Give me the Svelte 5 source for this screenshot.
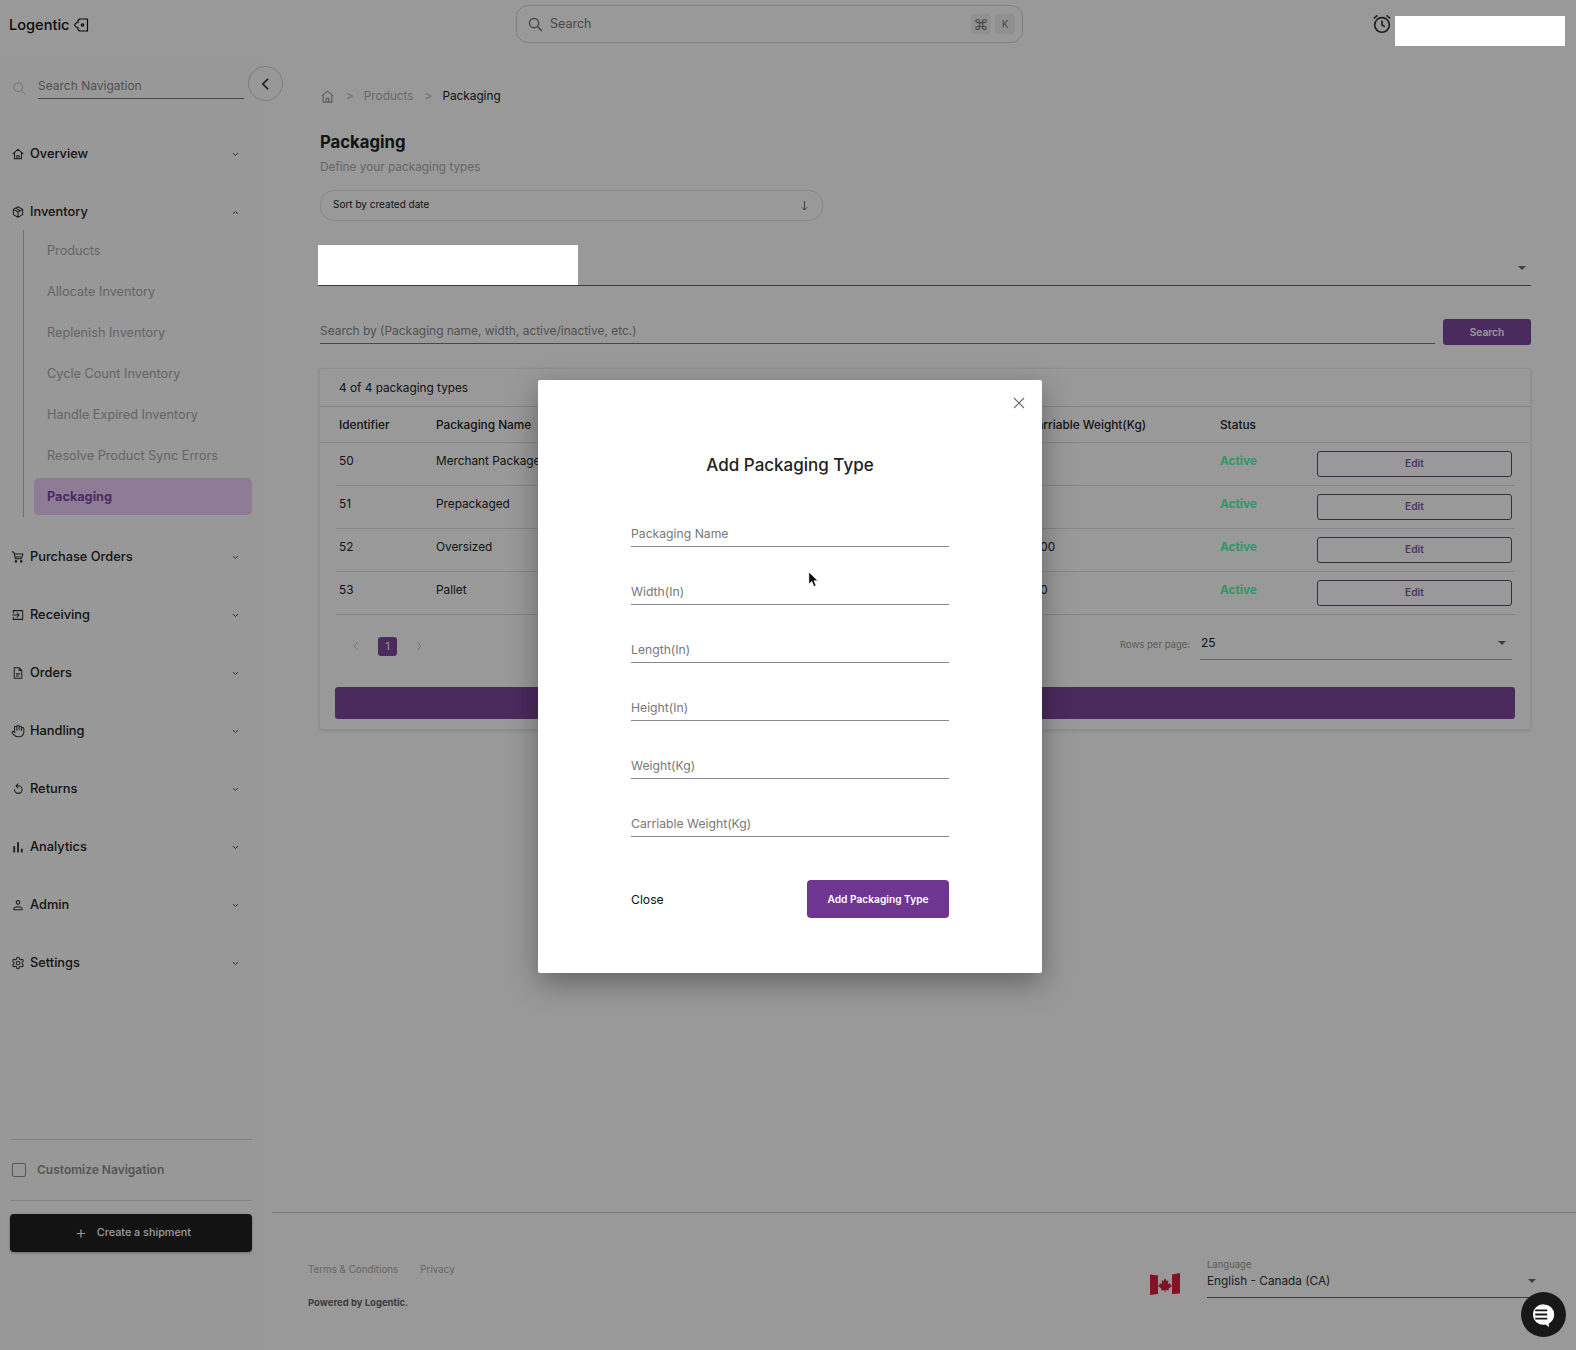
<script>
  const icons = {
    home: '<path d="M3.5 11.5 12 4l8.5 7.5M6 9.500V20h12V9.500M10 20v-5h4v5"/>',
    box: '<path d="M12 3l8 4.500v9L12 21l-8-4.500v-9zM4 7.500l8 4.500 8-4.500M12 12v9M8 5.300l8 4.500"/>',
    cart: '<path d="M2 3l3 1 2.500 11H19M6 7h14.500l-1.500 5H7.300"/><circle cx="8.500" cy="19.500" r="1.300"/><circle cx="17.500" cy="19.500" r="1.300"/>',
    receiving: '<path d="M4 8V4.500h16v15H4V16M3 12h11M10.500 8.500 14 12l-3.500 3.500"/>',
    orders: '<path d="M5.500 3H14l4.500 4.500V21h-13zM14 3v4.500h4.500M9 13.500h6M9 17h4"/>',
    hand: '<path d="M18 11V6a2 2 0 0 0-4 0M14 10V4a2 2 0 0 0-4 0v2M10 10.500V6a2 2 0 0 0-4 0v8M18 8a2 2 0 1 1 4 0v6a8 8 0 0 1-8 8h-2c-2.800 0-4.500-.860-5.990-2.340l-3.600-3.600a2 2 0 0 1 2.830-2.820L7 15"/>',
    returns: '<path d="M6 13a6.500 6.500 0 1 0 6.500-6.500H9M12 3 8.500 6.500 12 10"/>',
    admin: '<circle cx="12" cy="7.500" r="3"/><path d="M5 20v-1.500c0-2.500 4-3.500 7-3.500s7 1 7 3.500V20z"/>',
    settings: '<path d="M12.220 2h-.440a2 2 0 0 0-2 2v.180a2 2 0 0 1-1 1.730l-.430.250a2 2 0 0 1-2 0l-.150-.080a2 2 0 0 0-2.730.730l-.220.380a2 2 0 0 0 .730 2.730l.150.100a2 2 0 0 1 1 1.720v.510a2 2 0 0 1-1 1.740l-.150.090a2 2 0 0 0-.730 2.730l.220.380a2 2 0 0 0 2.730.730l.150-.080a2 2 0 0 1 2 0l.430.250a2 2 0 0 1 1 1.730V20a2 2 0 0 0 2 2h.440a2 2 0 0 0 2-2v-.180a2 2 0 0 1 1-1.730l.430-.250a2 2 0 0 1 2 0l.150.080a2 2 0 0 0 2.730-.730l.220-.390a2 2 0 0 0-.730-2.730l-.150-.080a2 2 0 0 1-1-1.740v-.500a2 2 0 0 1 1-1.740l.150-.090a2 2 0 0 0 .730-2.730l-.220-.380a2 2 0 0 0-2.730-.730l-.150.080a2 2 0 0 1-2 0l-.430-.250a2 2 0 0 1-1-1.730V4a2 2 0 0 0-2-2z"/><circle cx="12" cy="12" r="3"/>',
    analytics: '<path d="M5.500 12v8M12 5v15M18.500 16v4" stroke-width="3.200"/>'
  };

  const subItems = ['Products', 'Allocate Inventory', 'Replenish Inventory', 'Cycle Count Inventory', 'Handle Expired Inventory', 'Resolve Product Sync Errors', 'Packaging'];
  const lowerNav = [
    ['Purchase Orders', 'cart'], ['Receiving', 'receiving'], ['Orders', 'orders'], ['Handling', 'hand'],
    ['Returns', 'returns'], ['Analytics', 'analytics'], ['Admin', 'admin'], ['Settings', 'settings']
  ];
  const rows = [
    { id: 50, name: 'Merchant Packaged', weight: '5' },
    { id: 51, name: 'Prepackaged', weight: '8' },
    { id: 52, name: 'Oversized', weight: '1000' },
    { id: 53, name: 'Pallet', weight: '100' }
  ];
  const fields = ['Packaging Name', 'Width(In)', 'Length(In)', 'Height(In)', 'Weight(Kg)', 'Carriable Weight(Kg)'];
</script>

{#snippet icon(name)}
  <svg class="nav-icon" viewBox="0 0 24 24" fill="none" stroke="currentColor" stroke-width="1.800" stroke-linejoin="round" stroke-linecap="round">{@html icons[name]}</svg>
{/snippet}

{#snippet chevron(up)}
  <svg class="chev" viewBox="0 0 10 6" fill="none" stroke="currentColor" stroke-width="1.400">
    <path d={up ? 'M1.500 5 5 1.500 8.500 5' : 'M1.500 1 5 4.500 8.500 1'} />
  </svg>
{/snippet}

<div class="shell">
  <header class="topbar">
    <div class="logo">
      Logentic
      <svg viewBox="0 0 16 16" fill="none" stroke="currentColor" stroke-width="1.200" stroke-linejoin="round">
        <path d="M6.500 2h8v12h-8L5 12.500v-2L3 10 1.500 8 3 6l2-.5v-2z" />
        <circle cx="9.500" cy="8" r="1.200" />
      </svg>
    </div>
    <div class="global-search">
      <svg viewBox="0 0 24 24" fill="none" stroke="currentColor" stroke-width="2"><circle cx="10" cy="10" r="6.500" /><path d="m15 15 6 6" /></svg>
      <span class="gs-text">Search</span>
      <span class="kbd cmd">⌘</span>
      <span class="kbd">K</span>
    </div>
    <div class="top-right">
      <svg class="alarm" viewBox="0 0 24 24" fill="none" stroke="currentColor" stroke-width="1.800">
        <circle cx="12" cy="13" r="8" /><path d="M12 8.500V13l3 2M3 6l4-3.500M21 6l-4-3.500" />
      </svg>
      <div class="redact user-box"></div>
    </div>
  </header>

  <div class="body">
    <aside class="sidebar">
      <div class="nav-search">
        <svg viewBox="0 0 24 24" fill="none" stroke="currentColor" stroke-width="1.600"><circle cx="10" cy="10" r="7" /><path d="m15.500 15.500 6 6" /></svg>
        <span class="nav-search-input">Search Navigation</span>
        <button class="collapse" aria-label="Collapse">
          <svg viewBox="0 0 12 16" fill="none" stroke="currentColor" stroke-width="2"><path d="M9 2 3 8l6 6" /></svg>
        </button>
      </div>

      <nav>
        <div class="nav-head">{@render icon('home')}<span>Overview</span>{@render chevron(false)}</div>
        <div class="nav-head">{@render icon('box')}<span>Inventory</span>{@render chevron(true)}</div>
        <ul class="sub">
          {#each subItems as item}
            <li class:active={item === 'Packaging'}>{item}</li>
          {/each}
        </ul>
        {#each lowerNav as [label, name]}
          <div class="nav-head">{@render icon(name)}<span>{label}</span>{@render chevron(false)}</div>
        {/each}
      </nav>

      <div class="side-bottom">
        <div class="customize"><span class="check"></span>Customize Navigation</div>
        <button class="create"><span class="plus">+</span>Create a shipment</button>
      </div>
    </aside>

    <div class="content">
      <main>
        <div class="crumbs">
          <svg viewBox="0 0 24 24" fill="none" stroke="currentColor" stroke-width="1.800"><path d="M3 11 12 3.500 21 11M5 9.500V21h14V9.500M10 21v-6h4v6" /></svg>
          <span class="sep">&gt;</span>
          <span>Products</span>
          <span class="sep">&gt;</span>
          <span class="current">Packaging</span>
        </div>

        <h1>Packaging</h1>
        <p class="subtitle">Define your packaging types</p>

        <div class="sort">
          <span>Sort by created date</span>
          <svg viewBox="0 0 12 16" fill="none" stroke="currentColor" stroke-width="1.200"><path d="M6 2v12M2.500 10.500 6 14l3.500-3.500" /></svg>
        </div>

        <div class="tab-select">
          <div class="redact tab-box"></div>
          <span class="caret"></span>
        </div>

        <div class="search-row">
          <div class="search-input">Search by (Packaging name, width, active/inactive, etc.)</div>
          <button class="search-btn">Search</button>
        </div>

        <section class="card">
          <div class="card-title">4 of 4 packaging types</div>
          <div class="grid head">
            <span>Identifier</span>
            <span>Packaging Name</span>
            <span class="carriable">Carriable Weight(Kg)</span>
            <span>Status</span>
            <span></span>
          </div>
          {#each rows as row}
            <div class="grid row">
              <span>{row.id}</span>
              <span>{row.name}</span>
              <span class="carriable">{row.weight}</span>
              <span class="status">Active</span>
              <button class="edit">Edit</button>
            </div>
          {/each}
          <div class="pager">
            <svg class="page-arrow" viewBox="0 0 8 12" fill="none" stroke="currentColor" stroke-width="1.200"><path d="M6 1 1.500 6 6 11" /></svg>
            <span class="page-num">1</span>
            <svg class="page-arrow" viewBox="0 0 8 12" fill="none" stroke="currentColor" stroke-width="1.200"><path d="M2 1l4.500 5L2 11" /></svg>
            <span class="rows-label">Rows per page:</span>
            <div class="rows-select">25<span class="caret"></span></div>
          </div>
          <div class="wide-bar"></div>
        </section>
      </main>

      <footer>
        <div class="foot-left">
          <div class="foot-links"><span>Terms &amp; Conditions</span><span>Privacy</span></div>
          <div class="powered">Powered by Logentic.</div>
        </div>
        <div class="lang">
          <svg class="flag" viewBox="0 0 30 22">
            <path d="M0 1.500 8 2.500V21L0 22z" fill="#d8203f" />
            <path d="M22 1.500 30 0v20.500L22 21z" fill="#d8203f" />
            <path d="M15 5l1.500 3 2-.8-.7 3.800 2.200-.8.800 1.800 1.200 1-3.500 2.800.4 1.700-3.400-.5V19h-1v-2l-3.400.5.400-1.700-3.500-2.800 1.200-1 .8-1.800 2.200.8-.7-3.800 2 .8z" fill="#d8203f" />
          </svg>
          <div class="lang-field">
            <span class="lang-label">Language</span>
            <div class="lang-value">English - Canada (CA)<span class="caret"></span></div>
          </div>
        </div>
      </footer>
    </div>
  </div>

  <div class="backdrop"></div>

  <div class="modal">
    <button class="modal-x" aria-label="Close">
      <svg viewBox="0 0 12 12" fill="none" stroke="currentColor" stroke-width="1.100"><path d="m1 1 10 10M11 1 1 11" /></svg>
    </button>
    <h2>Add Packaging Type</h2>
    <div class="fields">
      {#each fields as field}
        <div class="field">{field}</div>
      {/each}
    </div>
    <div class="modal-actions">
      <button class="modal-close">Close</button>
      <button class="modal-add">Add Packaging Type</button>
    </div>
  </div>

  <svg class="cursor" viewBox="0 0 12 18"><path d="M1 1v13l3.200-3 2.300 5.500 2.200-1-2.300-5.200H10.500z" fill="#000" stroke="#fff" stroke-width=".6" /></svg>

  <button class="chat" aria-label="Chat">
    <svg viewBox="0 0 26 26">
      <path d="M13 1.500a11 11 0 0 1 11 11c0 4.500-2.500 8-6 10l.5 3.500-4-2.800A11 11 0 1 1 13 1.500z" fill="#fff" />
      <path d="M3.500 8h13M3.500 12.500h13M3.500 17h13" stroke="#181818" stroke-width="2" />
    </svg>
  </button>
</div>

<style>
  :global(body) {
    margin: 0;
    background: #fff;
  }
  .shell {
    position: relative;
    height: 1350px;
    overflow: hidden;
    display: flex;
    flex-direction: column;
    font-family: Inter, "Liberation Sans", sans-serif;
    color: #222;
  }
  button {
    font-family: inherit;
    cursor: pointer;
  }
  .redact {
    position: relative;
    z-index: 20;
    background: #fff;
  }

  /* top bar */
  .topbar {
    height: 56px;
    flex: none;
    display: flex;
    align-items: flex-start;
    position: relative;
  }
  .logo {
    display: flex;
    align-items: center;
    gap: 3px;
    margin: 15px 0 0 9px;
    width: 507px;
    font-size: 14.600px;
    line-height: 20px;
    font-weight: 500;
    color: #111;
  }
  .logo svg {
    width: 16px;
    height: 16px;
  }
  .global-search {
    width: 507px;
    height: 38px;
    margin-top: 5px;
    border: 1px solid #d8d8d8;
    border-radius: 12px;
    display: flex;
    align-items: center;
    padding: 0 7px 0 10px;
    box-sizing: border-box;
    color: #777;
    font-size: 12.500px;
  }
  .global-search svg {
    width: 17px;
    height: 17px;
    margin-right: 6px;
  }
  .gs-text {
    flex: 1;
    padding-bottom: 2px;
  }
  .kbd {
    width: 20px;
    height: 20px;
    margin-left: 4px;
    background: #f0f0f0;
    border-radius: 4px;
    display: flex;
    align-items: center;
    justify-content: center;
    font-size: 10px;
  }
  .kbd.cmd {
    font-size: 15px;
  }
  .top-right {
    margin-left: auto;
    margin-right: 11px;
    display: flex;
    align-items: flex-start;
    gap: 2px;
  }
  .alarm {
    width: 22px;
    height: 22px;
    margin-top: 13px;
    color: #333;
  }
  .user-box {
    width: 170px;
    height: 30px;
    margin-top: 16px;
  }

  .body {
    flex: 1;
    display: flex;
    min-height: 0;
  }

  /* sidebar */
  .sidebar {
    width: 264px;
    flex: none;
    background: #fdfdfd;
    display: flex;
    flex-direction: column;
    box-sizing: border-box;
  }
  .nav-search {
    display: flex;
    align-items: center;
    height: 62px;
    padding-left: 12px;
    margin-bottom: 7px;
  }
  .nav-search > svg {
    width: 15px;
    height: 15px;
    flex: none;
    color: #bdbdbd;
    margin-top: 3px;
  }
  .nav-search-input {
    flex: none;
    width: 206px;
    margin: 2px 4px 0 11px;
    padding-bottom: 3px;
    border-bottom: 1px solid #777;
    font-size: 12px;
    line-height: 18px;
    color: #888;
  }
  .collapse {
    flex: none;
    width: 35px;
    height: 35px;
    margin-top: -7px;
    border: 1px solid #d0d0d0;
    border-radius: 50%;
    background: #fdfdfd;
    display: flex;
    align-items: center;
    justify-content: center;
    padding: 0;
    color: #333;
    position: relative;
    z-index: 1;
  }
  .collapse svg {
    width: 11px;
    height: 14px;
  }
  .nav-head {
    height: 58px;
    display: flex;
    align-items: center;
    padding-left: 11px;
    font-size: 12.800px;
    font-weight: 500;
    color: #222;
  }
  .nav-head span {
    flex: 1;
    margin: 0 0 2px 5px;
  }
  .nav-icon {
    width: 14px;
    height: 14px;
    flex: none;
    color: #333;
  }
  .chev {
    width: 7px;
    height: 5px;
    margin-right: 25px;
    color: #444;
  }
  .sub {
    list-style: none;
    margin: -11px 12px 11px 23px;
    padding: 2px 0;
    display: flex;
    flex-direction: column;
    gap: 4px;
    border-left: 1px solid #bbb;
  }
  .sub li {
    height: 37px;
    margin-left: 10px;
    padding-left: 13px;
    border-radius: 5px;
    display: flex;
    align-items: center;
    font-size: 12.700px;
    color: #a8a8a8;
  }
  .sub li.active {
    background: #edcffa;
    color: #7d46a8;
    font-weight: 700;
  }
  .side-bottom {
    margin-top: auto;
    padding: 0 12px 98px 10px;
  }
  .customize {
    height: 59px;
    display: flex;
    align-items: center;
    padding: 0 0 1px 2px;
    box-sizing: content-box;
    border-top: 1px solid #dcdcdc;
    border-bottom: 1px solid #dcdcdc;
    font-size: 12px;
    font-weight: 600;
    color: #8f8f8f;
    margin-bottom: 13px;
  }
  .check {
    width: 12px;
    height: 12px;
    border: 1.500px solid #8f8f8f;
    border-radius: 2px;
    margin-right: 11px;
  }
  .create {
    width: 242px;
    height: 38px;
    border: 0;
    padding: 0 0 1px 4px;
    border-radius: 4px;
    background: #202020;
    color: #fff;
    font-size: 10.800px;
    font-weight: 500;
    display: flex;
    align-items: center;
    justify-content: center;
    box-shadow: 0 1px 3px rgba(0, 0, 0, 0.3);
  }
  .plus {
    font-size: 18px;
    font-weight: 300;
    margin-right: 10px;
    line-height: 1;
  }

  /* main */
  .content {
    flex: 1;
    min-width: 0;
    display: flex;
    flex-direction: column;
  }
  main {
    flex: 1;
    padding: 30px 45px 0 56px;
    min-height: 0;
  }
  .crumbs {
    display: flex;
    align-items: center;
    height: 20px;
    font-size: 11.800px;
    color: #b0b0b0;
  }
  .crumbs svg {
    width: 15px;
    height: 15px;
    color: #999;
    margin: 1px 0 0 0;
  }
  .sep {
    margin: 0 10px 0 11px;
  }
  .current {
    color: #222;
  }
  h1 {
    margin: 24px 0 0;
    font-size: 16.700px;
    line-height: 24px;
    font-weight: 700;
    color: #222;
  }
  .subtitle {
    margin: 4px 0 0;
    font-size: 11.800px;
    line-height: 18px;
    color: #aaa;
  }
  .sort {
    width: 503px;
    height: 31px;
    box-sizing: border-box;
    margin-top: 14px;
    padding: 0 13px 0 12px;
    border: 1px solid #e4e4e4;
    border-radius: 14px;
    display: flex;
    align-items: center;
    justify-content: space-between;
    font-size: 10px;
    color: #222;
  }
  .sort span {
    padding-bottom: 4px;
  }
  .sort svg {
    width: 9px;
    height: 13px;
    color: #555;
  }
  .tab-select {
    margin: 24px 0 0 -2px;
    height: 40px;
    border-bottom: 1px solid #666;
    display: flex;
    justify-content: space-between;
    align-items: center;
  }
  .tab-box {
    width: 260px;
    height: 40px;
  }
  .caret {
    width: 0;
    height: 0;
    border-left: 4px solid transparent;
    border-right: 4px solid transparent;
    border-top: 4px solid #666;
  }
  .tab-select .caret {
    margin: 6px 5px 0 0;
  }
  .search-row {
    display: flex;
    justify-content: space-between;
    margin-top: 34px;
  }
  .search-input {
    width: 1115px;
    height: 24px;
    border-bottom: 1px solid #777;
    box-sizing: border-box;
    font-size: 11.950px;
    line-height: 22px;
    color: #888;
  }
  .search-btn {
    width: 88px;
    height: 26px;
    margin-top: -1px;
    border: 0;
    border-radius: 3px;
    background: #7d469d;
    color: #fff;
    font-size: 10.200px;
    font-weight: 600;
  }
  .card {
    margin: 23px 0 0 -1px;
    height: 362px;
    border: 1px solid #eee;
    border-radius: 3px;
    box-shadow: 0 1px 3px rgba(0, 0, 0, 0.12);
    box-sizing: border-box;
    font-size: 11.800px;
    color: #222;
  }
  .card-title {
    height: 38px;
    padding-left: 19px;
    box-sizing: border-box;
    display: flex;
    align-items: center;
    border-bottom: 1px solid #e0e0e0;
  }
  .grid {
    display: grid;
    grid-template-columns: 97px 592px 192px 97px 195px;
    box-sizing: border-box;
  }
  .head {
    height: 36px;
    padding-left: 19px;
    align-items: center;
    border-bottom: 1px solid #e0e0e0;
    font-weight: 500;
  }
  .row {
    height: 43px;
    margin: 0 15px 0 16px;
    padding: 8px 0 0 3px;
    border-bottom: 1px solid #e0e0e0;
    line-height: 20px;
  }
  .carriable {
    white-space: nowrap;
  }
  .status {
    color: #4dfcaf;
    font-weight: 700;
  }
  .edit {
    height: 26px;
    padding: 0 0 2px;
    border: 1px solid #5b4a70;
    border-radius: 3px;
    background: transparent;
    color: #7d5aa8;
    font-size: 10.200px;
    font-weight: 600;
  }
  .pager {
    height: 72px;
    display: flex;
    align-items: center;
    padding: 0 18px 10px 33px;
    box-sizing: border-box;
  }
  .page-arrow {
    width: 6px;
    height: 10px;
    color: #bbb;
  }
  .page-num {
    width: 19px;
    height: 19px;
    margin: 0 19px;
    border-radius: 3px;
    background: #7d469d;
    color: #fff;
    font-size: 10px;
    display: flex;
    align-items: center;
    justify-content: center;
  }
  .rows-label {
    margin: 0 10px 4px auto;
    font-size: 9.500px;
    color: #999;
  }
  .rows-select {
    width: 312px;
    height: 28px;
    box-sizing: border-box;
    padding: 0 0 6px 1px;
    border-bottom: 1px solid #aaa;
    display: flex;
    justify-content: space-between;
    align-items: center;
    font-size: 12px;
  }
  .rows-select .caret {
    margin-right: 6px;
  }
  .wide-bar {
    height: 32px;
    margin: 0 15px;
    border-radius: 3px;
    background: #7d469d;
  }

  /* footer */
  footer {
    height: 138px;
    flex: none;
    margin-left: 8px;
    border-top: 1px solid #ccc;
    box-sizing: border-box;
    display: flex;
    justify-content: space-between;
    padding: 49px 40px 0 36px;
  }
  .foot-links {
    display: flex;
    gap: 22px;
    font-size: 9.800px;
    line-height: 16px;
    color: #aaa;
  }
  .powered {
    margin-top: 17px;
    font-size: 9.500px;
    line-height: 16px;
    font-weight: 700;
    color: #666;
  }
  .lang {
    display: flex;
    align-items: flex-start;
    width: 386px;
    margin-top: -3px;
  }
  .flag {
    width: 30px;
    height: 22px;
    margin: 14px 27px 0 0;
    flex: none;
  }
  .lang-field {
    flex: 1;
  }
  .lang-label {
    display: block;
    font-size: 9.500px;
    line-height: 12px;
    color: #999;
  }
  .lang-value {
    display: flex;
    align-items: center;
    justify-content: space-between;
    height: 27px;
    padding-bottom: 7px;
    box-sizing: border-box;
    border-bottom: 1px solid #666;
    font-size: 11.800px;
    color: #333;
  }

  /* modal */
  .backdrop {
    position: absolute;
    inset: 0;
    z-index: 10;
    background: rgba(0, 0, 0, 0.4);
  }
  .modal {
    position: absolute;
    z-index: 30;
    left: 538px;
    top: 380px;
    width: 504px;
    height: 593px;
    box-sizing: border-box;
    padding: 0 93px;
    background: #fff;
    border-radius: 2px;
    box-shadow: 0 10px 30px rgba(0, 0, 0, 0.35);
  }
  .modal-x {
    position: absolute;
    top: 17px;
    right: 17px;
    width: 12px;
    height: 12px;
    padding: 0;
    border: 0;
    background: none;
    color: #666;
    display: block;
  }
  .modal-x svg {
    display: block;
  }
  h2 {
    margin: 73px 0 0;
    height: 24px;
    text-align: center;
    font-size: 17px;
    line-height: 24px;
    font-weight: 500;
    color: #222;
  }
  .fields {
    margin-top: 46px;
  }
  .field {
    height: 24px;
    margin-bottom: 34px;
    box-sizing: border-box;
    border-bottom: 1px solid #8a8a8a;
    font-size: 12.200px;
    line-height: 18px;
    padding-top: 2px;
    color: #777;
  }
  .modal-actions {
    display: flex;
    justify-content: space-between;
    align-items: center;
    margin-top: 43px;
  }
  .modal-close {
    border: 0;
    background: none;
    padding: 0;
    font-size: 12.200px;
    color: #111;
  }
  .modal-add {
    width: 142px;
    height: 38px;
    border: 0;
    border-radius: 4px;
    background: #6e3591;
    color: #fff;
    font-size: 10.200px;
    font-weight: 600;
  }
  .cursor {
    position: absolute;
    z-index: 40;
    left: 808px;
    top: 571px;
    width: 11px;
    height: 17px;
  }
  .chat {
    position: absolute;
    z-index: 40;
    left: 1521px;
    top: 1292px;
    width: 45px;
    height: 45px;
    border: 0;
    border-radius: 50%;
    background: #181818;
    display: flex;
    align-items: center;
    justify-content: center;
    padding: 0;
  }
  .chat svg {
    width: 24px;
    height: 24px;
  }
</style>
